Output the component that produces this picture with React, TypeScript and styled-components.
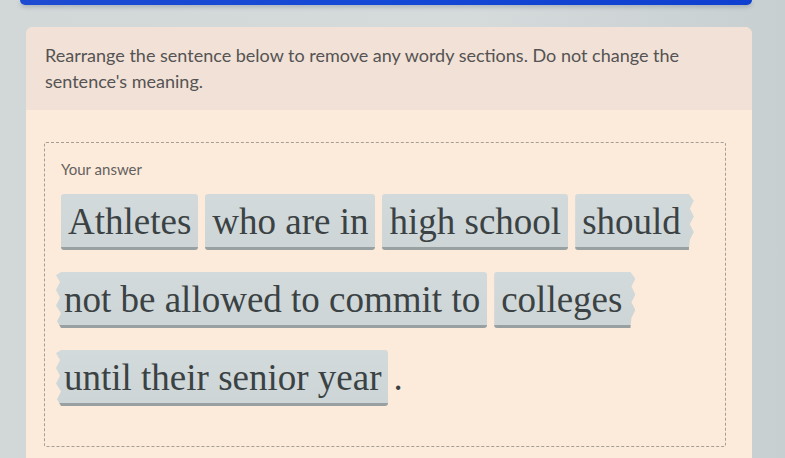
import React from "react";
import styled, { createGlobalStyle, css } from "styled-components";

const GlobalStyle = createGlobalStyle`
  html, body {
    margin: 0;
    padding: 0;
    background: #cfd6d6;
    overflow: hidden;
  }
  body {
    font-family: "Lato", "Open Sans", sans-serif;
  }
`;

const Page = styled.div`
  width: 785px;
  height: 458px;
  overflow: hidden;
  background: linear-gradient(90deg, #d2d8d8 0%, #d5dbdb 60%, #c8cfd1 100%);
  display: flex;
  flex-direction: column;
`;

const TopBar = styled.div`
  margin-left: 20px;
  width: 732px;
  height: 5px;
  flex: none;
  background: linear-gradient(90deg, #1d4bd2 0%, #1448d6 50%, #0f3fd0 100%);
  border-radius: 0 0 6px 6px;
  box-shadow: 0 2px 4px rgba(40, 60, 90, 0.25);
`;

const Card = styled.section`
  margin: 22px 0 0 26px;
  width: 726px;
  flex: 1;
  background: #fcebda;
  border-radius: 7px 7px 0 0;
  display: flex;
  flex-direction: column;
  overflow: hidden;
`;

const Prompt = styled.div`
  background: #f1e1d6;
  padding: 15px 19px 0 19px;
  height: 83px;
  box-sizing: border-box;
  color: #555353;
  font-size: 18px;
  line-height: 26px;
`;

const AnswerArea = styled.div`
  padding: 32px 26px 0 18px;
`;

const DashedBox = styled.div`
  height: 305px;
  border: 1px dashed #a59e96;
  border-radius: 2px;
  padding: 16px 18px 0 16px;
  box-sizing: border-box;
`;

const Label = styled.div`
  color: #646060;
  font-size: 15px;
  line-height: 20px;
  margin-bottom: 15px;
`;

const Sentence = styled.div`
  display: flex;
  flex-wrap: wrap;
  align-items: flex-end;
  column-gap: 7px;
  row-gap: 22px;
`;

const teeth = (side: "left" | "right") =>
  side === "right"
    ? "polygon(0 0, calc(100% - 5px) 0, 100% 12%, calc(100% - 4px) 26%, 100% 40%, calc(100% - 4px) 54%, 100% 68%, calc(100% - 4px) 82%, calc(100% - 5px) 100%, 0 100%)"
    : "polygon(5px 0, 100% 0, 100% 100%, 5px 100%, 1px 88%, 5px 74%, 0 60%, 4px 46%, 0 32%, 4px 18%, 0 6%)";

const Tile = styled.span<{ $torn?: "left" | "right" }>`
  display: inline-block;
  background: linear-gradient(180deg, #d3dadb 0%, #cdd5d6 100%);
  color: #3b4244;
  font-family: "Liberation Serif", "Times New Roman", serif;
  font-size: 37px;
  line-height: 46px;
  padding: 5px 7px 2px;
  border-bottom: 3px solid #98a0a2;
  border-radius: 3px;
  white-space: nowrap;
  ${(p) =>
    p.$torn === "right" &&
    css`
      padding-right: 13px;
      border-top-right-radius: 0;
      border-bottom-right-radius: 0;
      clip-path: ${teeth("right")};
    `}
  ${(p) =>
    p.$torn === "left" &&
    css`
      margin-left: -5px;
      padding-left: 8px;
      border-top-left-radius: 0;
      border-bottom-left-radius: 0;
      clip-path: ${teeth("left")};
    `}
`;

const Stop = styled.span`
  font-family: "Liberation Serif", "Times New Roman", serif;
  font-size: 37px;
  line-height: 46px;
  color: #3b4244;
  margin-left: -2px;
  padding-bottom: 5px;
`;

type Piece = { text: string; torn?: "left" | "right" };

const pieces: Piece[] = [
  { text: "Athletes" },
  { text: "who are in" },
  { text: "high school" },
  { text: "should", torn: "right" },
  { text: "not be allowed to commit to", torn: "left" },
  { text: "colleges", torn: "right" },
  { text: "until their senior year", torn: "left" },
];

export default function App() {
  return (
    <>
      <GlobalStyle />
      <Page>
        <TopBar />
        <Card>
          <Prompt>
            Rearrange the sentence below to remove any wordy sections. Do not change the
            <br />
            sentence's meaning.
          </Prompt>
          <AnswerArea>
            <DashedBox>
              <Label>Your answer</Label>
              <Sentence>
                {pieces.map((p) => (
                  <Tile key={p.text} $torn={p.torn}>
                    {p.text}
                  </Tile>
                ))}
                <Stop>.</Stop>
              </Sentence>
            </DashedBox>
          </AnswerArea>
        </Card>
      </Page>
    </>
  );
}
